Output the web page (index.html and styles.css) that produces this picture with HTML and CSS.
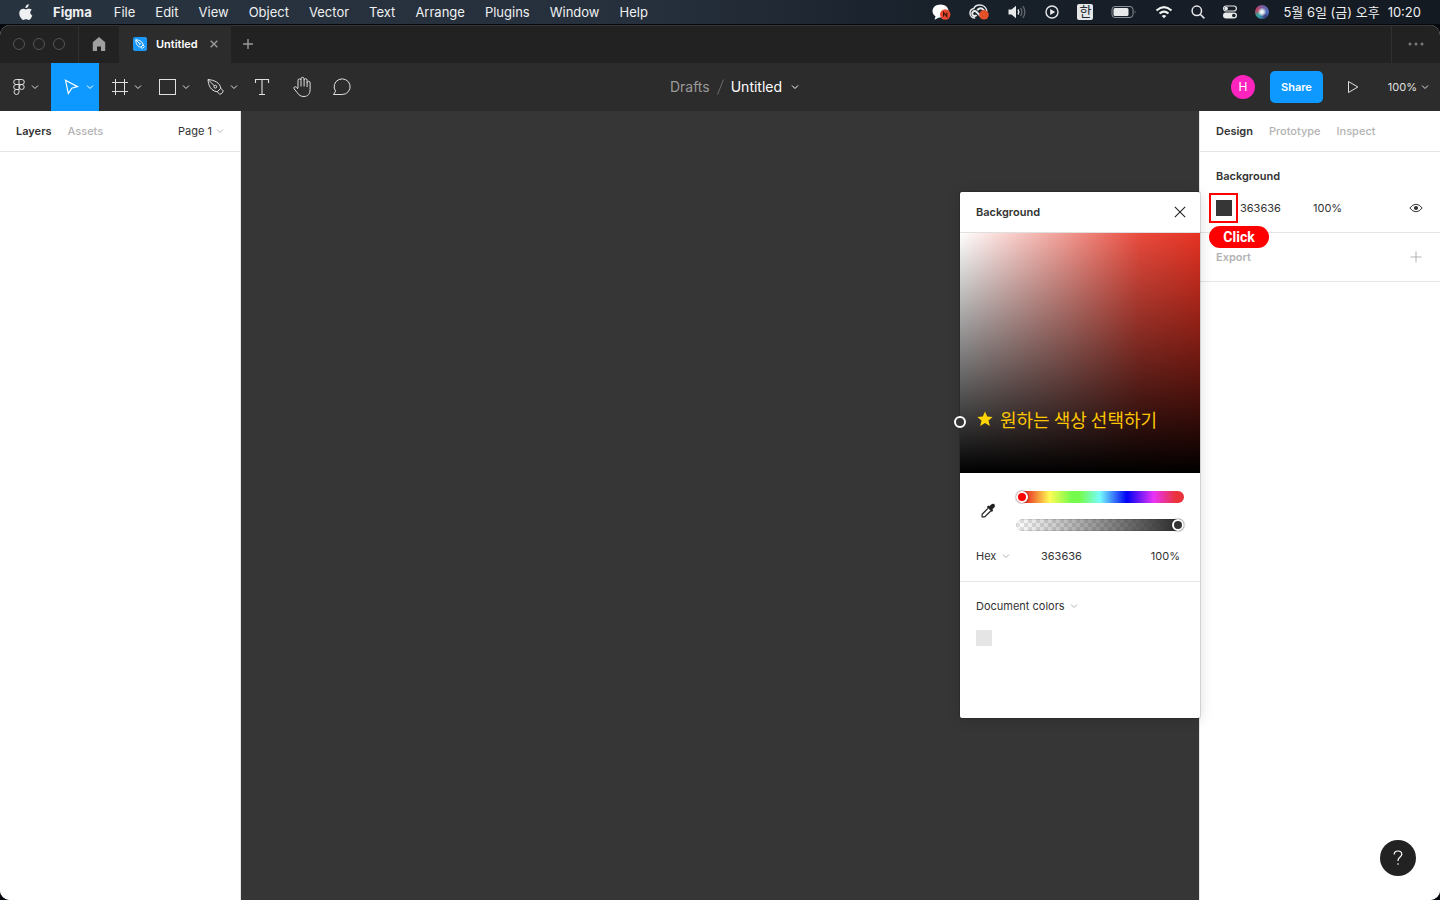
FILE: index.html
```html
<!DOCTYPE html>
<html lang="en">
<head>
<meta charset="utf-8">
<title>Untitled – Figma</title>
<link rel="stylesheet" href="styles.css">
</head>
<body>
<svg class="defs" aria-hidden="true">
  <symbol id="chev" viewBox="0 0 8 8"><path d="M1 2.500 4 5.500 7 2.500" fill="none" stroke="currentColor"/></symbol>
</svg>

<header class="menubar">
  <nav class="menus">
    <svg class="apple" viewBox="0 0 14 17" aria-label="Apple"><path fill="currentColor" d="M9.7.3c.1 1.1-.3 2-.9 2.7-.6.7-1.500 1.200-2.400 1.100-.1-1 .4-2 .9-2.600C7.900.8 8.900.3 9.700.3zM12.900 5.800c-1 .6-1.600 1.500-1.600 2.700 0 1.400.8 2.400 2 2.900-.3.900-.7 1.700-1.200 2.500-.7 1-1.400 2-2.500 2-1 0-1.400-.6-2.600-.6s-1.600.6-2.600.6c-1.100 0-1.900-1.100-2.600-2.100C.3 11.800-.3 8.800.9 6.700c.7-1.200 1.900-2 3.200-2 1.100 0 2 .7 2.800.7.700 0 1.800-.8 3.100-.7 1.100 0 2.200.4 2.900 1.100z"/></svg>
    <a href="#" class="menu app">Figma</a>
    <a href="#" class="menu">File</a>
    <a href="#" class="menu">Edit</a>
    <a href="#" class="menu">View</a>
    <a href="#" class="menu">Object</a>
    <a href="#" class="menu">Vector</a>
    <a href="#" class="menu">Text</a>
    <a href="#" class="menu">Arrange</a>
    <a href="#" class="menu">Plugins</a>
    <a href="#" class="menu">Window</a>
    <a href="#" class="menu">Help</a>
  </nav>
  <div class="status">
    <svg class="s20" viewBox="0 0 20 18"><path fill="#fff" d="M9.500 1.500c4.500 0 8 2.800 8 6.500s-3.500 6.500-8 6.500l-1.500-.1-4.500 2.400 1-3.500C2.500 12.200 1.500 10.200 1.500 8c0-3.700 3.500-6.500 8-6.500z"/><circle cx="14.200" cy="11.500" r="5.200" fill="#e8492e"/><path d="M12.600 13.500v-4l3.200 4v-4" fill="none" stroke="#42140d" stroke-width="1.200"/></svg>
    <svg class="s20" viewBox="0 0 20 18"><path d="M6.200 15C3.300 15 1 12.900 1 10.200c0-2.300 1.600-4.200 3.800-4.700C5.800 3 8.200 2 10.600 2c3.800 0 6.900 2.600 7.400 6.300" fill="none" stroke="#e8e9ea" stroke-width="1.500"/><path d="M12 13.500 7.400 8.700a2.500 2.500 0 1 0 .2 3.500M8.400 7.200c1-1.800 3.400-2.500 5.200-1.200 1.200.9 1.600 2.300 1.200 3.500" fill="none" stroke="#e8e9ea" stroke-width="2"/><circle cx="15" cy="11.800" r="4.800" fill="#e3502a"/></svg>
    <svg class="s20" viewBox="0 0 20 18"><path fill="#e8e9ea" d="M1.500 6.500h3L9 2.800v12.400L4.500 11.500h-3z"/><g fill="none" stroke-width="1.400"><path d="M11 6.500q1.600 2.500 0 5" stroke="#e8e9ea"/><path d="M13.500 4.800q2.700 4.200 0 8.400M16 3.200q3.700 5.800 0 11.600" stroke="#5f656c"/></g></svg>
    <svg class="s14" viewBox="0 0 14 14"><circle cx="7" cy="7" r="6" fill="none" stroke="#e8e9ea" stroke-width="1.400"/><path fill="#e8e9ea" d="M5.200 4v6l5-3z"/></svg>
    <span class="ime">한</span>
    <svg class="battery" viewBox="0 0 26 14"><rect x="1" y="1.500" width="21" height="11" rx="3" fill="none" stroke="#8b9096"/><rect x="2.500" y="3" width="15" height="8" rx="1.500" fill="#e8e9ea"/><path d="M23.700 5.200q1.700 1.800 0 3.600z" fill="#8b9096"/></svg>
    <svg class="wifi" viewBox="0 0 18 14"><g fill="none" stroke="#f0f1f1" stroke-width="2"><path d="M1.500 5.500q7.500-6.800 15 0"/><path d="M4.500 8.600q4.500-4 9 0"/></g><path fill="#f0f1f1" d="M9 13.300 6.700 11q2.300-2 4.600 0z"/></svg>
    <svg class="s14" viewBox="0 0 14 14"><g fill="none" stroke="#e8e9ea" stroke-width="1.500"><circle cx="5.800" cy="5.800" r="4.700"/><path d="m9.200 9.200 4.200 4.200"/></g></svg>
    <svg class="s14" viewBox="0 0 14 14"><rect x=".6" y="1" width="12.800" height="5" rx="2.500" fill="none" stroke="#e8e9ea" stroke-width="1.200"/><circle cx="3.200" cy="3.500" r="1.800" fill="#e8e9ea"/><rect y="7.500" width="14" height="6" rx="3" fill="#e8e9ea"/><circle cx="10.800" cy="10.500" r="1.800" fill="#1a212a"/></svg>
    <span class="siri"></span>
    <time class="clock"><span>5월 6일 (금) 오후</span><span>10:20</span></time>
  </div>
</header>

<div class="window">
  <div class="tabbar">
    <div class="lights"><i></i><i></i><i></i></div>
    <button class="home" aria-label="Home"><svg class="s14" viewBox="0 0 14 14"><path fill="#a0a0a0" d="M7 0 .8 5.200V14H5V9.500h4V14h4.200V5.200z"/></svg></button>
    <div class="tab">
      <svg class="s14" viewBox="0 0 14 14"><rect width="14" height="14" rx="2" fill="#1a98fa"/><g fill="none" stroke="#fff"><path d="M2.800 2.800C3 6.500 4 9.300 7.800 10.200l1.500 1.300 2-2-1.200-1.500C9.800 5 7 3 2.800 2.800zM7.800 10.200 10.100 8M2.800 2.800l3.500 3.500"/><circle cx="6.800" cy="6.800" r=".6"/></g></svg>
      <span>Untitled</span>
      <button class="tab-close" aria-label="Close tab"><svg viewBox="0 0 8 8"><path d="m.7.7 6.600 6.600M7.300.7.7 7.300" stroke="#9a9a9a" stroke-width="1.400"/></svg></button>
    </div>
    <button class="tab-new" aria-label="New tab"><svg viewBox="0 0 10 10"><path d="M5 0v10M0 5h10" stroke="#9a9a9a" stroke-width="1.400"/></svg></button>
    <button class="tab-more" aria-label="More"><svg viewBox="0 0 16 4"><g fill="#7b7b7b"><circle cx="2" cy="2" r="1.500"/><circle cx="8" cy="2" r="1.500"/><circle cx="14" cy="2" r="1.500"/></g></svg></button>
  </div>

  <div class="toolbar">
    <div class="tools">
      <button class="tool main-menu" aria-label="Main menu"><svg class="ico" viewBox="0 0 24 24"><g fill="none" stroke="currentColor"><path d="M12 4.500H9.200a2.500 2.500 0 0 0 0 5H12zM12 4.500h2.800a2.500 2.500 0 0 1 0 5H12M12 9.500H9.200a2.500 2.500 0 0 0 0 5H12zM12 14.500H9.200A2.500 2.500 0 1 0 12 17z"/><circle cx="14.700" cy="12" r="2.500"/></g></svg><svg class="chev"><use href="#chev"/></svg></button>
      <button class="tool active" aria-label="Move"><svg class="ico" viewBox="0 0 24 24"><path d="M5.500 5.200 17.500 11.600l-5.700 1.600-3.500 5.300z" fill="none" stroke="currentColor" stroke-width="1.200"/></svg><svg class="chev"><use href="#chev"/></svg></button>
      <button class="tool" aria-label="Frame"><svg class="ico" viewBox="0 0 24 24"><path d="M7.500 4v16M16.500 4v16M4 7.500h16M4 16.500h16" stroke="currentColor"/></svg><svg class="chev"><use href="#chev"/></svg></button>
      <button class="tool" aria-label="Rectangle"><svg class="ico" viewBox="0 0 24 24"><rect x="3.500" y="4.500" width="16" height="15" fill="none" stroke="currentColor"/></svg><svg class="chev"><use href="#chev"/></svg></button>
      <button class="tool" aria-label="Pen"><svg class="ico" viewBox="0 0 24 24"><g fill="none" stroke="currentColor" stroke-linejoin="round"><path d="M4 4.500C4.500 10.500 6.500 15.600 13.200 16.800l2.600 2.500c1.600-.3 3-1.700 3.400-3.400l-2.400-2.600C15.800 7.500 10.500 5.200 4 4.500z"/><path d="M13.200 16.800 16.800 13.300M4 4.500l6.300 6.200"/><circle cx="11.300" cy="11.700" r="1.400"/></g></svg><svg class="chev"><use href="#chev"/></svg></button>
      <button class="tool solo" aria-label="Text"><svg class="ico" viewBox="0 0 24 24"><path d="M5.500 8V4.500h13V8M12 4.500v15M9 19.500h6" fill="none" stroke="currentColor" stroke-width="1.100"/></svg></button>
      <button class="tool solo" aria-label="Hand"><svg class="ico" viewBox="0 0 24 24"><path d="M8 13V5.400a1.500 1.500 0 0 1 3 0V11.500M11 5V3.900a1.500 1.500 0 0 1 3.100 0V11.500M14.100 5.200a1.500 1.500 0 0 1 3 0V12M17.100 7.800a1.500 1.500 0 0 1 3 0V14.500c0 4.500-2.300 7-6.100 7-3.300 0-5-1.200-6.700-3.800L4.200 13.900c-1-1.500.9-3 2.200-1.700L8 14" fill="none" stroke="currentColor" stroke-linejoin="round"/></svg></button>
      <button class="tool solo" aria-label="Comment"><svg class="ico" viewBox="0 0 24 24"><path d="M3.500 19.500h8.700A8 7.800 0 1 0 5.600 16.200z" fill="none" stroke="currentColor" stroke-linejoin="round"/></svg></button>
    </div>
    <div class="doc-title">
      <a href="#" class="drafts">Drafts</a>
      <svg class="slash" viewBox="0 0 7 16"><path d="M6.500.5.500 15.500" stroke="#6b6b6b"/></svg>
      <button class="doc-name">Untitled<svg class="chev"><use href="#chev"/></svg></button>
    </div>
    <div class="actions">
      <span class="avatar">H</span>
      <button class="share">Share</button>
      <button class="play" aria-label="Present"><svg class="s14" viewBox="0 0 14 14"><path d="M2.500 1.500v11L11.800 7z" fill="none" stroke="currentColor"/></svg></button>
      <button class="zoom">100%<svg class="chev"><use href="#chev"/></svg></button>
    </div>
  </div>

  <main class="work">
    <aside class="panel left">
      <div class="panel-tabs">
        <button class="ptab on">Layers</button>
        <button class="ptab">Assets</button>
        <button class="page">Page 1<svg class="chev dim"><use href="#chev"/></svg></button>
      </div>
    </aside>
    <section class="canvas" aria-label="Canvas"></section>
    <aside class="panel right">
      <div class="panel-tabs">
        <button class="ptab on">Design</button>
        <button class="ptab">Prototype</button>
        <button class="ptab">Inspect</button>
      </div>
      <section class="bg-section">
        <h2>Background</h2>
        <div class="bg-row">
          <button class="swatch" aria-label="Background colour"><span class="mark"></span><span class="click">Click</span></button>
          <input class="bg-hex" aria-label="Hex" value="363636">
          <input class="bg-alpha" aria-label="Opacity" value="100%">
          <button class="eye" aria-label="Toggle visibility"><svg viewBox="0 0 14 10"><path d="M.8 5Q7-2.600 13.200 5 7 12.600.8 5z" fill="none" stroke="currentColor"/><circle cx="7" cy="5" r="2.100" fill="currentColor"/></svg></button>
        </div>
      </section>
      <section class="export">
        <h2>Export</h2>
        <button class="add" aria-label="Add export"><svg viewBox="0 0 12 12"><path d="M6 .5v11M.5 6h11" stroke="#b3b3b3"/></svg></button>
      </section>
    </aside>

    <div class="picker" role="dialog" aria-label="Background">
      <div class="picker-head">
        <h2>Background</h2>
        <button class="x" aria-label="Close"><svg viewBox="0 0 12 12"><path d="m.8.8 10.400 10.400M11.200.8.8 11.200" stroke="#222" stroke-width="1.100"/></svg></button>
      </div>
      <div class="field">
        <span class="handle"></span>
        <p class="note"><svg viewBox="0 0 16 16"><path fill="#ffd400" d="m8 .5 2.200 5 5.400.5-4.100 3.600 1.300 5.400L8 12.100 3.200 15l1.300-5.400L.4 6l5.400-.5z"/></svg>원하는 색상 선택하기</p>
      </div>
      <div class="mix">
        <button class="dropper" aria-label="Eyedropper"><svg viewBox="0 0 16 16"><path fill="#222" d="M10.300 2.300c1.300-1.600 2.600-2 3.700-1.200 1.300 1 1.300 2.400 0 3.700l-1.600 1.700.8 1-1.400 1.400-5-5 1.400-1.400 1 .8z"/><path d="m8 5.300-5.900 6v2.600h2.600l6-5.900" fill="none" stroke="#222" stroke-width="1.200"/></svg></button>
        <div class="sliders">
          <input type="range" class="hue" aria-label="Hue" min="0" max="360" value="0">
          <input type="range" class="alpha" aria-label="Opacity" min="0" max="100" value="100">
        </div>
      </div>
      <div class="values">
        <label class="mode"><select aria-label="Colour format"><option>Hex</option></select><svg class="chev dim"><use href="#chev"/></svg></label>
        <input class="hex" aria-label="Hex" value="363636">
        <input class="pct" aria-label="Opacity" value="100%">
      </div>
      <div class="library">
        <button class="lib-name">Document colors<svg class="chev dim"><use href="#chev"/></svg></button>
        <button class="chip" aria-label="E5E5E5"></button>
      </div>
    </div>

    <button class="help" aria-label="Help"><svg viewBox="0 0 10 16"><path d="M1.200 4.500C1.200 2.300 2.800 1 5 1s3.800 1.300 3.800 3.300C8.800 7 5 7 5 10.500v.5" fill="none" stroke="#fff" stroke-width="1.200"/><circle cx="5" cy="14" r=".8" fill="#fff"/></svg></button>
  </main>
</div>
</body>
</html>
```
FILE: styles.css
```css
* { box-sizing: border-box; }
html, body { height: 100%; }
body {
  margin: 0;
  display: flex;
  flex-direction: column;
  gap: 1px;
  background: #05080c;
  color: #333;
  font: 11px/16px Inter, "Noto Sans CJK KR", sans-serif;
}
button, input, select { font: inherit; color: inherit; background: none; border: 0; padding: 0; margin: 0; }
button { display: flex; align-items: center; }
a { color: inherit; text-decoration: none; }
h2 { margin: 0; font-size: 11px; font-weight: 600; }
svg { display: block; flex: none; }
.defs { position: absolute; width: 0; height: 0; }
.chev { width: 8px; height: 8px; }
.dim { color: #b3b3b3; }
.s14 { width: 14px; height: 14px; }
.s20 { width: 20px; height: 18px; }

.menubar {
  height: 24px;
  display: flex;
  justify-content: space-between;
  align-items: center;
  padding: 0 19px;
  background: linear-gradient(90deg, #283340, #26303c 45%, #18202a 65%, #141a22);
  color: #eff0f1;
  font-size: 13px;
}
.menus { display: flex; align-items: center; gap: 20px; }
.apple { width: 14px; height: 17px; }
.app { font-weight: 700; padding-right: 2px; }
.status { display: flex; align-items: center; gap: 18px; }
.ime { width: 16px; height: 16px; border-radius: 2px; background: #e4e6e8; color: #222a33; font-size: 13px; line-height: 15px; text-align: center; }
.battery { width: 26px; height: 14px; }
.wifi { width: 18px; height: 14px; }
.siri {
  width: 14px;
  height: 14px;
  border-radius: 50%;
  background: radial-gradient(circle at 50% 50%, #fff 0, #d9e4ec 18%, transparent 45%), conic-gradient(#7d5a9c, #4a6fc0 25%, #3a3f80 40%, #3b8fa8 55%, #2fa39a 65%, #c2415e 80%, #7d5a9c);
}
.clock { display: flex; gap: 8px; margin-left: -4px; font-size: 13px; }

.window {
  flex: 1;
  min-height: 0;
  display: flex;
  flex-direction: column;
  border-radius: 10px;
  overflow: hidden;
  background: #fff;
}
.tabbar { height: 38px; display: flex; background: #222; box-shadow: inset 0 1px #343434; }
.lights { width: 79px; display: flex; align-items: center; gap: 8px; padding-left: 13px; border-right: 1px solid #303030; }
.lights i { width: 12px; height: 12px; border: 1px solid #555; border-radius: 50%; }
.home { width: 40px; justify-content: center; }
.tab { width: 112px; display: flex; align-items: center; gap: 9px; padding-left: 14px; background: #2c2c2c; color: #fff; font-weight: 600; }
.tab-close { margin-left: auto; margin-right: 13px; }
.tab-close svg { width: 8px; height: 8px; }
.tab-new { padding-left: 12px; }
.tab-new svg { width: 10px; height: 10px; }
.tab-more { margin-left: auto; width: 49px; justify-content: center; border-left: 1px solid #303030; }
.tab-more svg { width: 16px; height: 4px; }

.toolbar { height: 48px; display: grid; grid-template-columns: 1fr auto 1fr; background: #2c2c2c; color: #e0e0e0; }
.tools { display: flex; }
.tool { width: 48px; gap: 2px; padding-left: 9px; }
.main-menu { width: 51px; gap: 0; padding-left: 7px; }
.active { background: #0d99ff; color: #fff; }
.solo { width: 40px; padding-left: 7px; }
.ico { width: 24px; height: 24px; }
.doc-title { display: flex; align-items: center; gap: 7px; padding-left: 29px; font-size: 14px; }
.drafts { color: #9a9a9a; }
.slash { width: 7px; height: 16px; }
.doc-name { gap: 9px; color: #fff; }
.actions { display: flex; justify-content: flex-end; align-items: center; padding-right: 11px; }
.avatar { width: 24px; height: 24px; border-radius: 50%; background: #ff24bd; color: #fff; font-size: 12px; line-height: 24px; text-align: center; }
.share { height: 32px; margin-left: 15px; padding: 0 11px; border-radius: 5px; background: #0d99ff; color: #fff; font-weight: 600; }
.play { margin: 0 28px 0 23px; }
.zoom { gap: 4px; }

.work { position: relative; flex: 1; min-height: 0; display: grid; grid-template-columns: 241px 1fr 241px; }
.canvas { background: #363636; }
.panel { background: #fff; }
.left { border-right: 1px solid #e5e5e5; }
.right { border-left: 1px solid #e5e5e5; }
.panel-tabs { height: 41px; display: flex; align-items: center; gap: 16px; padding: 0 16px; border-bottom: 1px solid #e5e5e5; }
.ptab { color: #b3b3b3; font-weight: 500; }
.ptab.on { color: #333; font-weight: 600; }
.page { margin-left: auto; gap: 4px; }
.bg-section { height: 81px; padding: 16px; border-bottom: 1px solid #e5e5e5; }
.bg-row { display: flex; align-items: center; padding-top: 16px; height: 32px; }
.swatch { position: relative; width: 16px; height: 16px; background: #363636; }
.mark { position: absolute; left: -7px; top: -7px; width: 29px; height: 30px; border: 2px solid #f00; }
.click {
  position: absolute;
  left: -7px;
  top: 26px;
  width: 60px;
  height: 22px;
  border-radius: 11px;
  background: #f00;
  color: #fff;
  font: 700 14px/22px Roboto, sans-serif;
  text-align: center;
}
.bg-hex { width: 73px; padding-left: 8px; }
.bg-alpha { width: 60px; margin-left: 8px; }
.eye { margin-left: auto; margin-right: 1px; }
.eye svg { width: 14px; height: 10px; }
.export { height: 49px; display: flex; align-items: center; justify-content: space-between; padding: 0 18px 0 16px; border-bottom: 1px solid #e5e5e5; color: #b3b3b3; }
.add svg { width: 12px; height: 12px; }

.picker {
  position: absolute;
  top: 81px;
  right: 240px;
  width: 240px;
  min-height: 526px;
  border-radius: 2px;
  background: #fff;
  box-shadow: 0 2px 14px rgba(0, 0, 0, .15), 0 0 0 1px rgba(0, 0, 0, .12);
}
.picker-head { height: 41px; display: flex; align-items: center; justify-content: space-between; padding: 0 14px 0 16px; border-bottom: 1px solid #e0e0e0; }
.x svg { width: 12px; height: 12px; }
.field { position: relative; height: 240px; background: linear-gradient(to top, #000, transparent), linear-gradient(to right, #fff, #f0978f 45%, #e94b3d 75%, #e63323); }
.handle { position: absolute; left: -6px; top: 183px; width: 12px; height: 12px; border: 2px solid #fff; border-radius: 50%; background: #363636; }
.note {
  position: absolute;
  left: 17px;
  top: 173px;
  display: flex;
  align-items: center;
  gap: 7px;
  margin: 0;
  color: #ffc700;
  font: 400 18px/26px "Noto Sans CJK KR", sans-serif;
  white-space: nowrap;
}
.note svg { width: 16px; height: 16px; }
.mix { display: flex; align-items: center; justify-content: space-between; padding: 18px 16px 0 20px; }
.dropper svg { width: 16px; height: 16px; }
.sliders { width: 168px; display: grid; gap: 16px; }
.sliders input { appearance: none; width: 100%; height: 12px; border-radius: 6px; }
.sliders input::-webkit-slider-thumb { appearance: none; width: 12px; height: 12px; border: 2px solid #fff; border-radius: 50%; background: #f00; box-shadow: 0 0 1px 1px rgba(0, 0, 0, .2); }
.sliders .alpha::-webkit-slider-thumb { background: #333; }
.hue { background: linear-gradient(90deg, #ea3323 6%, #fffb54 20%, #75fb4c 33%, #75fb4c 38%, #75fbfd 50%, #0000f5 66%, #ea33f7 82%, #ea333a 95%); }
.alpha { background: linear-gradient(90deg, transparent, #363636 92%), repeating-conic-gradient(#e2e2e2 0 25%, #fff 0 50%) 0 0 / 8px 8px; box-shadow: inset 0 0 0 1px rgba(0, 0, 0, .1); }
.values { display: flex; align-items: center; height: 50px; padding: 0 16px; }
.mode { width: 65px; display: flex; align-items: center; gap: 5px; }
.mode select { appearance: none; }
.hex { width: 80px; }
.pct { width: 60px; margin-left: auto; padding-right: 4px; text-align: right; }
.library { border-top: 1px solid #e5e5e5; padding: 16px; display: grid; gap: 16px; justify-items: start; }
.lib-name { gap: 5px; }
.chip { width: 16px; height: 16px; background: #e5e5e5; }

.help { position: absolute; right: 24px; bottom: 24px; width: 36px; height: 36px; justify-content: center; border-radius: 50%; background: #222; }
.help svg { width: 10px; height: 16px; }
```
